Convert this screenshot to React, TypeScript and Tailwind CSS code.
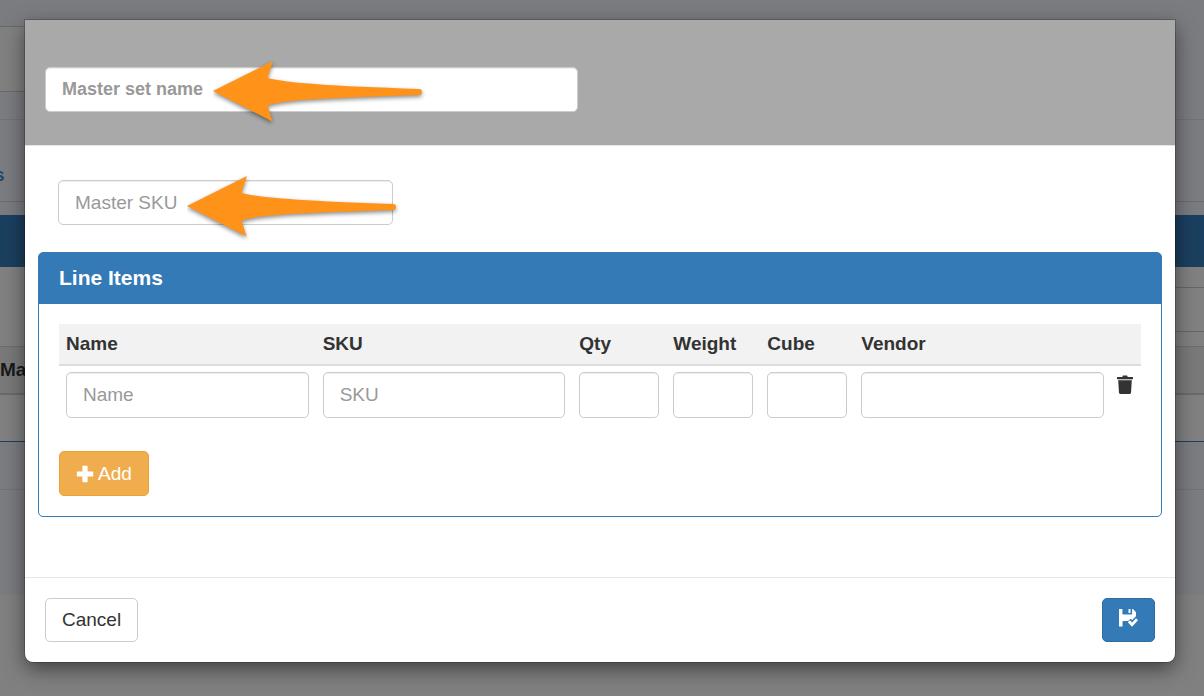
import { useState } from "react";

const columns = [
  { key: "name", label: "Name", width: "", placeholder: "Name" },
  { key: "sku", label: "SKU", width: "", placeholder: "SKU" },
  { key: "qty", label: "Qty", width: "w-[94px]", placeholder: "" },
  { key: "weight", label: "Weight", width: "w-[94px]", placeholder: "" },
  { key: "cube", label: "Cube", width: "w-[94px]", placeholder: "" },
  { key: "vendor", label: "Vendor", width: "", placeholder: "" },
];

const inputClass =
  "block w-full rounded-[5px] border border-[#ccc] bg-white px-4 text-[#333] shadow-[inset_0_1px_1px_rgba(0,0,0,0.075)] outline-none placeholder:text-[#999] focus:border-[#66afe9]";

function Arrow({ className }: { className: string }) {
  return (
    <svg
      className={`pointer-events-none absolute h-[66px] w-[214px] ${className}`}
      viewBox="0 0 214 66"
      aria-hidden="true"
    >
      <path
        d="M0 31 L60 1 L54.500 18 C74 23 118 26 206 29 Q209 29 209 32 Q209 35 206 35 C118 38 76 39 54.500 45.500 L59.500 61.500 Z"
        fill="#ff931a"
        className="drop-shadow-[0_2px_2px_rgba(0,0,0,0.45)]"
      />
    </svg>
  );
}

function TrashIcon() {
  return (
    <svg className="h-5 w-[18px]" viewBox="0 0 18 20" aria-hidden="true">
      <path d="M1 2h5.500V1.200Q6.500 0.500 7.200 0.500h3.600q.7 0 .7.700V2H17v2H1z" fill="#333" />
      <path d="M1.500 4h15v1.200h-15z" fill="#bbb" />
      <path d="M2.200 5.200h13.600l-.8 12.300q-.1 1.500-1.500 1.500h-9q-1.400 0-1.500-1.500z" fill="#333" />
    </svg>
  );
}

function SaveIcon() {
  return (
    <svg className="h-5 w-[19px]" viewBox="0 0 19 20" fill="#fff" aria-hidden="true">
      <path d="M0 1h3.400v4.800q0 .7.700.7h8.300q.7 0 .7-.7V1h.9L17 4.300v3.900l-3.800 3.800-1.500-1.300-2.700 2.300H4.500q-1 0-1 1V18.500H0z" />
      <path d="M9.500 1h2v4h-2z" />
      <path d="M8.800 14.300l2-2 2.300 2.200L17 10.300l2 2-6 6.400z" />
    </svg>
  );
}

function Backdrop() {
  return (
    <div className="min-h-screen overflow-hidden bg-[#808080]" aria-hidden="true">
      <div className="bg-[#7b7c80]">
        <div className="h-[26px]" />
        <div className="h-[66px] w-1/2 border-y border-[#696969] bg-[#808080]" />
        <div className="h-7 border-b border-[#727377]" />
        <div className="flex h-[82px] items-center border-b border-[#6b6c70] pt-7">
          <span className="-ml-1.5 font-bold text-[#22486b]">s</span>
        </div>
        <div className="h-[13px]" />
      </div>
      <div className="h-[52px] bg-[#1b3f5f]" />
      <div className="flex h-[79px] justify-end py-5">
        <div className="mb-[-6px] w-1/2 border-y border-[#666]" />
      </div>
      <div className="flex h-[49px] items-center border-t border-b-2 border-t-[#6c6c6c] border-b-[#6a6a6a] bg-[#797979] font-bold text-[#191919]">
        Master
      </div>
      <div className="h-[47px] border-b border-[#1b3f5f]" />
      <div className="h-[48px] border-b border-[#717276] bg-[#7b7c80]" />
      <div className="h-[105px] bg-[#7b7c80]" />
    </div>
  );
}

export default function App() {
  const [rows, setRows] = useState([1]);

  const addRow = () => setRows([...rows, Math.max(0, ...rows) + 1]);
  const removeRow = (id: number) => setRows(rows.filter((row) => row !== id));

  return (
    <div className="relative font-['Liberation_Sans',Arial,sans-serif] text-[19px] leading-[26px] text-[#333]">
      <Backdrop />

      <div className="absolute inset-0 pt-5 pr-[29px] pl-[25px]">
        <form
          role="dialog"
          aria-label="Master set"
          onSubmit={(e) => e.preventDefault()}
          className="rounded-b-lg bg-white shadow-[0_0_0_1px_rgba(0,0,0,0.2),0_7px_20px_rgba(0,0,0,0.5)]"
        >
          <header className="border-b border-[#e5e5e5] bg-[#a9a9a9] px-5 pt-[47px] pb-[33px]">
            <div className="relative w-12/25">
              <input
                aria-label="Master set name"
                placeholder="Master set name"
                className={`${inputClass} h-[45px] text-lg font-bold`}
              />
              <Arrow className="-top-[7px] left-[168px]" />
            </div>
          </header>

          <div className="px-[13px] pt-[34px] pb-15">
            <div className="px-5">
              <div className="relative w-[335px] max-w-full">
                <input
                  aria-label="Master SKU"
                  placeholder="Master SKU"
                  className={`${inputClass} h-[45px]`}
                />
                <Arrow className="-top-[5px] left-[129px]" />
              </div>
            </div>

            <section className="mt-[27px] rounded-[5px] border border-[#337ab7]">
              <h3 className="rounded-t-[3px] bg-[#337ab7] px-5 pt-3 pb-[13px] text-[21px] font-bold text-white">
                Line Items
              </h3>
              <div className="p-5">
                <table className="w-full table-fixed border-collapse">
                  <thead>
                    <tr className="h-[41px] border-b-2 border-[#ddd] bg-[#f2f2f2] text-left">
                      {columns.map((col) => (
                        <th key={col.key} className={`px-[7px] ${col.width}`}>
                          {col.label}
                        </th>
                      ))}
                      <th className="w-[30px]" />
                    </tr>
                  </thead>
                  <tbody>
                    {rows.map((row) => (
                      <tr key={row}>
                        {columns.map((col) => (
                          <td key={col.key} className="px-[7px] py-1.5">
                            <input
                              aria-label={col.label}
                              placeholder={col.placeholder}
                              className={`${inputClass} h-[46px]`}
                            />
                          </td>
                        ))}
                        <td className="pt-[9px] pl-[5px] align-top">
                          <button
                            type="button"
                            aria-label="Remove line"
                            className="block"
                            onClick={() => removeRow(row)}
                          >
                            <TrashIcon />
                          </button>
                        </td>
                      </tr>
                    ))}
                  </tbody>
                </table>

                <button
                  type="button"
                  onClick={addRow}
                  className="mt-[27px] flex h-[45px] items-center gap-1 rounded-[5px] border border-[#eea236] bg-[#f0ad4e] px-4 text-white"
                >
                  <svg className="h-[18px] w-[18px]" viewBox="0 0 18 18" fill="#fff" aria-hidden="true">
                    <path d="M7 .800h4q.6 0 .6.600V6.400h5q.6 0 .6.600v4q0 .6-.6.600h-5v5q0 .6-.6.600H7q-.6 0-.6-.6v-5H1.400q-.6 0-.6-.6V7q0-.6.600-.6h5v-5Q6.400.8 7 .8z" />
                  </svg>
                  Add
                </button>
              </div>
            </section>
          </div>

          <footer className="flex items-center justify-between border-t border-[#e5e5e5] p-5">
            <button type="button" className="h-11 rounded-[5px] border border-[#ccc] bg-white px-4">
              Cancel
            </button>
            <button
              type="submit"
              aria-label="Save"
              className="flex h-11 items-center rounded-[5px] border border-[#2e6da4] bg-[#337ab7] px-4 pb-1"
            >
              <SaveIcon />
            </button>
          </footer>
        </form>
      </div>
    </div>
  );
}
